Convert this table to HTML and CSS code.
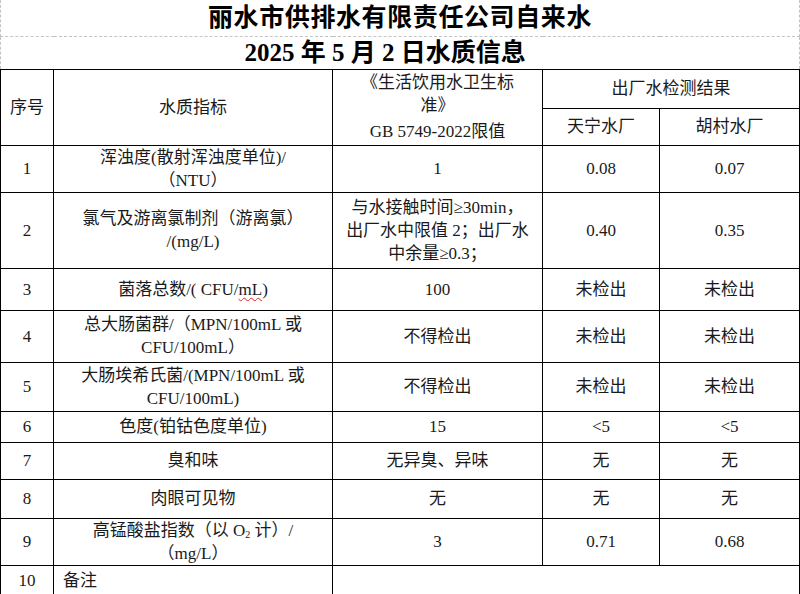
FILE: index.html
```html
<!DOCTYPE html>
<html lang="zh-CN">
<head>
<meta charset="utf-8">
<title>丽水市供排水有限责任公司自来水 水质信息</title>
<link rel="stylesheet" href="styles.css">
</head>
<body>
<table class="sheet">
  <colgroup>
    <col class="c-no">
    <col class="c-item">
    <col class="c-std">
    <col class="c-a">
    <col class="c-b">
  </colgroup>
  <tbody>
    <tr class="title h36">
      <td colspan="5" class="t1">丽水市供排水有限责任公司自来水</td>
    </tr>
    <tr class="title h33">
      <td colspan="5" class="t2">2025 年 5 月 2 日水质信息</td>
    </tr>
    <tr class="h39">
      <td rowspan="2">序号</td>
      <td rowspan="2">水质指标</td>
      <td rowspan="2" class="std">《生活饮用水卫生标<br>准》<br><span class="gb">GB 5749-2022限值</span></td>
      <td colspan="2">出厂水检测结果</td>
    </tr>
    <tr class="h37">
      <td>天宁水厂</td>
      <td>胡村水厂</td>
    </tr>
    <tr class="h46">
      <td>1</td>
      <td>浑浊度(散射浑浊度单位)/<br>（NTU）</td>
      <td>1</td>
      <td>0.08</td>
      <td>0.07</td>
    </tr>
    <tr class="h76">
      <td>2</td>
      <td>氯气及游离氯制剂（游离氯）<br>/(mg/L)</td>
      <td>与水接触时间≥30min，<br>出厂水中限值 2；出厂水<br>中余量≥0.3；</td>
      <td>0.40</td>
      <td>0.35</td>
    </tr>
    <tr class="h42">
      <td>3</td>
      <td>菌落总数/( CFU/<span class="spell">mL</span>)</td>
      <td>100</td>
      <td>未检出</td>
      <td>未检出</td>
    </tr>
    <tr class="h52">
      <td>4</td>
      <td>总大肠菌群/（MPN/100mL 或<br>CFU/100mL）</td>
      <td>不得检出</td>
      <td>未检出</td>
      <td>未检出</td>
    </tr>
    <tr class="h49">
      <td>5</td>
      <td>大肠埃希氏菌/(MPN/100mL 或<br>CFU/100mL)</td>
      <td>不得检出</td>
      <td>未检出</td>
      <td>未检出</td>
    </tr>
    <tr class="h31">
      <td>6</td>
      <td>色度(铂钴色度单位)</td>
      <td>15</td>
      <td>&lt;5</td>
      <td>&lt;5</td>
    </tr>
    <tr class="h37">
      <td>7</td>
      <td>臭和味</td>
      <td>无异臭、异味</td>
      <td>无</td>
      <td>无</td>
    </tr>
    <tr class="h39">
      <td>8</td>
      <td>肉眼可见物</td>
      <td>无</td>
      <td>无</td>
      <td>无</td>
    </tr>
    <tr class="h46">
      <td>9</td>
      <td>高锰酸盐指数（以 O<sub class="sub">2</sub> 计）/<br>（mg/L）</td>
      <td>3</td>
      <td>0.71</td>
      <td>0.68</td>
    </tr>
    <tr class="h30">
      <td>10</td>
      <td class="note">备注</td>
      <td colspan="3"></td>
    </tr>
  </tbody>
</table>
</body>
</html>
```
FILE: styles.css
```css
html, body {
  margin: 0;
  padding: 0;
  background: #ffffff;
}

.sheet {
  border-collapse: collapse;
  table-layout: fixed;
  width: 800px;
  font-family: "Liberation Serif", "Noto Sans CJK SC", serif;
  font-size: 17px;
  line-height: 23px;
  color: #1a1a1a;
}

.c-no { width: 53px; }
.c-item { width: 279px; }
.c-std { width: 210px; }
.c-a { width: 117px; }
.c-b { width: 140px; }

.sheet td {
  border: 1px solid #000;
  padding: 0 2px;
  text-align: center;
  vertical-align: middle;
  white-space: nowrap;
  overflow: hidden;
}

.sheet .title td {
  border: 1px dashed #c4c4c4;
  font-weight: bold;
  font-size: 25px;
  line-height: 30px;
  color: #000;
}

.sheet .title .t1 {
  border-top: none;
  letter-spacing: 0.6px;
}

.sheet .title .t2 {
  padding-right: 32px;
}

.std .gb {
  display: inline-block;
  margin-top: 3px;
}

.spell {
  text-decoration: underline wavy #e02020;
  text-decoration-thickness: 1px;
  text-underline-offset: 2px;
}

.sub {
  font-size: 10px;
  line-height: 0;
  vertical-align: -2px;
}

.sheet td.note {
  text-align: left;
  padding-left: 9px;
}

.h30 { height: 30px; }
.h31 { height: 31px; }
.h33 { height: 33px; }
.h36 { height: 36px; }
.h37 { height: 37px; }
.h39 { height: 39px; }
.h42 { height: 42px; }
.h46 { height: 46px; }
.h49 { height: 49px; }
.h52 { height: 52px; }
.h76 { height: 76px; }
```
